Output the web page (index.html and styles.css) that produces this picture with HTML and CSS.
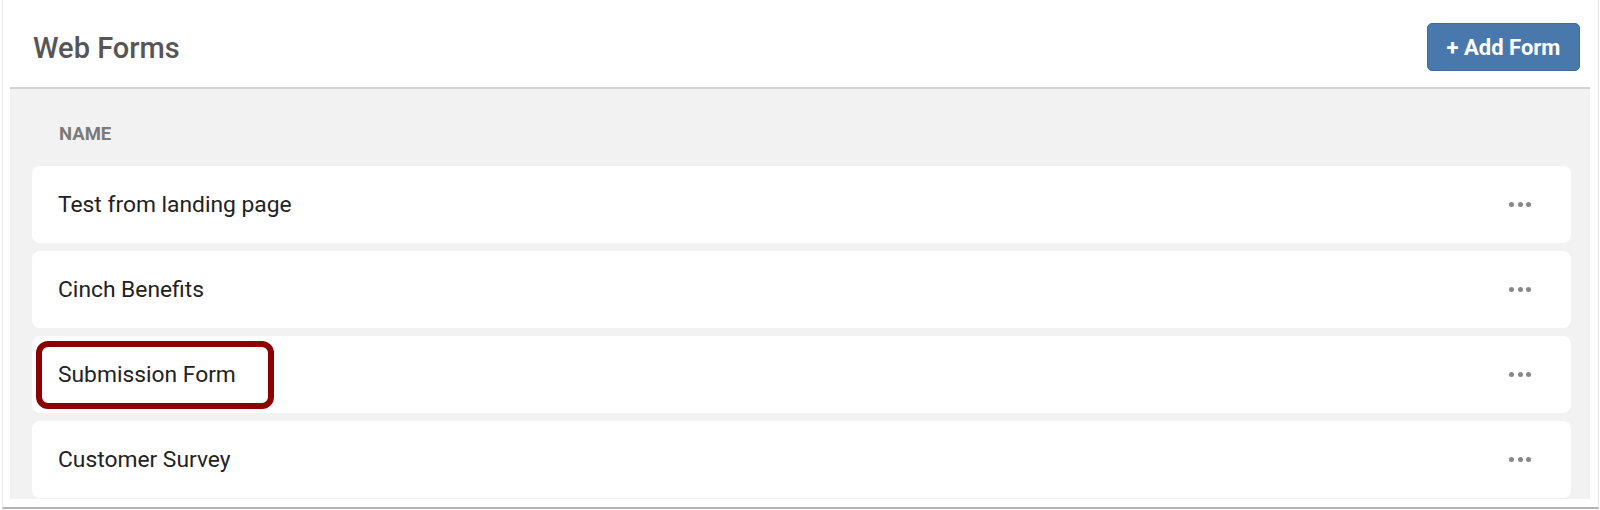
FILE: index.html
```html
<!DOCTYPE html>
<html>
<head>
<meta charset="utf-8">
<link rel="stylesheet" href="styles.css">
</head>
<body>
<div class="panel">
  <div class="header">
    <h1 class="title">Web Forms</h1>
    <button class="add-btn">+ Add Form</button>
  </div>
  <div class="list">
    <div class="col-head">NAME</div>
    <div class="rows">
      <div class="row"><span class="name">Test from landing page</span><span class="more"><i></i><i></i><i></i></span></div>
      <div class="row"><span class="name">Cinch Benefits</span><span class="more"><i></i><i></i><i></i></span></div>
      <div class="row"><span class="name">Submission Form</span><span class="more"><i></i><i></i><i></i></span><span class="highlight"></span></div>
      <div class="row"><span class="name">Customer Survey</span><span class="more"><i></i><i></i><i></i></span></div>
    </div>
  </div>
</div>
</body>
</html>
```
FILE: styles.css
```css
* { box-sizing: border-box; }
html, body { margin: 0; padding: 0; background: #fff; }
body { font-family: Roboto, "Liberation Sans", sans-serif; width: 1600px; height: 510px; overflow: hidden; }

.panel {
  margin: 0 1px 0 2px;
  padding: 0 8px 8px 7px;
  border-left: 1px solid #ececec;
  border-right: 1px solid #e2e2e2;
  border-bottom: 2px solid #b4b4b4;
}

.header {
  height: 89px;
  padding: 8px 10px 0 23px;
  display: flex;
  align-items: center;
  justify-content: space-between;
  border-bottom: 2px solid #d2d2d2;
}
.title {
  margin: 0;
  font-size: 29px;
  font-weight: 500;
  color: #565656;
  line-height: 34px;
}
.add-btn {
  height: 48px;
  width: 153px;
  padding: 0;
  margin-bottom: 1px;
  border: 1px solid #3f6c9c;
  border-radius: 5px;
  background: #4878ac;
  color: #fff;
  font-family: Roboto, "Liberation Sans", sans-serif;
  font-size: 22px;
  font-weight: 700;
}

.list {
  background: #f2f2f2;
  padding: 34px 19px 1px 22px;
}
.col-head {
  padding-left: 27px;
  font-size: 18.5px;
  line-height: 22px;
  font-weight: 700;
  color: #7a7a7a;
  margin-bottom: 21px;
}
.rows { display: flex; flex-direction: column; gap: 8px; }
.row {
  position: relative;
  height: 77px;
  background: #fff;
  border-radius: 8px;
  display: flex;
  align-items: center;
  justify-content: space-between;
  padding: 0 40px 0 26px;
}
.name { font-size: 22.8px; color: #222; }
.more { display: flex; gap: 3.5px; }
.more i { width: 5px; height: 5px; border-radius: 50%; background: #878787; display: block; }

.highlight {
  position: absolute;
  left: 4px;
  top: 5px;
  width: 238px;
  height: 68px;
  border: 6px solid #8c0000;
  border-radius: 12px;
}
```
